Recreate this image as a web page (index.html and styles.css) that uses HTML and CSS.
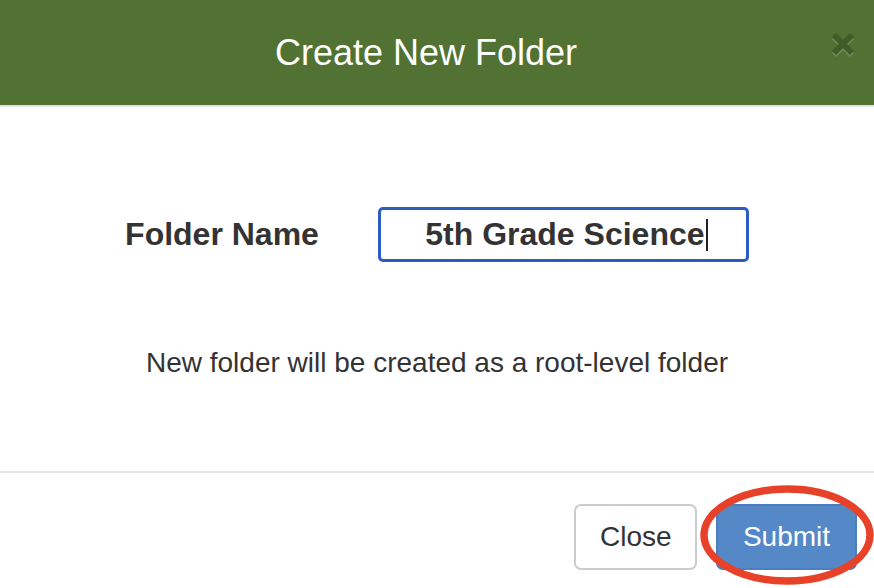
FILE: index.html
```html
<!DOCTYPE html>
<html lang="en">
<head>
<meta charset="utf-8">
<title>Create New Folder</title>
<link rel="stylesheet" href="styles.css">
</head>
<body>
<div class="modal">
  <header class="modal-header">
    <h1 class="modal-title">Create New Folder</h1>
    <button class="close-x" aria-label="Close">
      <svg width="26" height="28" viewBox="0 0 26 28">
        <path d="M4 6 L22 24 M22 6 L4 24" stroke="#6e8f55" stroke-width="6" stroke-linecap="butt"/>
        <path d="M4 4 L22 22 M22 4 L4 22" stroke="#3f5c29" stroke-width="6" stroke-linecap="butt"/>
      </svg>
    </button>
  </header>
  <main class="modal-body">
    <div class="field-row">
      <label class="field-label" for="fname">Folder Name</label>
      <div class="field-input"><span class="field-value">5th Grade Science</span><span class="caret"></span></div>
    </div>
    <p class="note">New folder will be created as a root-level folder</p>
  </main>
  <footer class="modal-footer">
    <button class="btn btn-default">Close</button>
    <div class="submit-wrap">
      <button class="btn btn-primary">Submit</button>
      <svg class="highlight" width="176" height="100" viewBox="0 0 176 100">
        <ellipse cx="87" cy="50" rx="83" ry="46" fill="none" stroke="#e8412a" stroke-width="7.5"/>
      </svg>
    </div>
  </footer>
</div>
</body>
</html>
```
FILE: styles.css
```css
* { box-sizing: border-box; }
html, body { margin: 0; padding: 0; background: #fff; }
body {
  font-family: "Liberation Sans", Arial, Helvetica, sans-serif;
  color: #333;
  width: 874px;
  height: 588px;
  overflow: hidden;
}
.modal { display: flex; flex-direction: column; }
.modal-header {
  position: relative;
  height: 107px;
  background: #517233;
  border-bottom: 2px solid #e3e3e3;
  display: flex;
  align-items: center;
  justify-content: center;
  padding-right: 22px;
}
.modal-title {
  margin: 0;
  font-weight: normal;
  font-size: 36px;
  color: #fff;
}
.close-x {
  position: absolute;
  right: 18px;
  top: 31px;
  padding: 0;
  border: 0;
  background: none;
  line-height: 0;
}
.modal-body {
  height: 366px;
  border-bottom: 2px solid #e5e5e5;
  display: flex;
  flex-direction: column;
  align-items: center;
  padding-top: 100px;
}
.field-row {
  display: flex;
  align-items: center;
  gap: 59px;
}
.field-label {
  font-weight: bold;
  font-size: 32px;
  color: #333;
}
.field-input {
  width: 371px;
  height: 55px;
  border: 3px solid #2c5ec2;
  border-radius: 5px;
  display: flex;
  align-items: center;
  justify-content: center;
  font-weight: bold;
  font-size: 32px;
  color: #333;
  padding-left: 6px;
}
.caret {
  display: inline-block;
  width: 2px;
  height: 32px;
  background: #222;
  margin-left: 1px;
}
.note {
  margin: 85px 0 0;
  font-size: 28px;
  color: #333;
}
.modal-footer {
  display: flex;
  justify-content: flex-end;
  align-items: flex-start;
  gap: 19px;
  padding: 31px 17px 0 0;
}
.btn {
  height: 66px;
  font-family: "Liberation Sans", Arial, Helvetica, sans-serif;
  font-size: 28px;
  border-radius: 7px;
  padding: 0 24px;
}
.btn-default {
  width: 123px;
  background: #fff;
  border: 2px solid #ccc;
  color: #333;
}
.btn-primary {
  width: 141px;
  background: #5588c6;
  border: 2px solid #4b7fbf;
  color: #fff;
}
.submit-wrap { position: relative; }
.highlight {
  position: absolute;
  left: -16px;
  top: -19px;
}
```
